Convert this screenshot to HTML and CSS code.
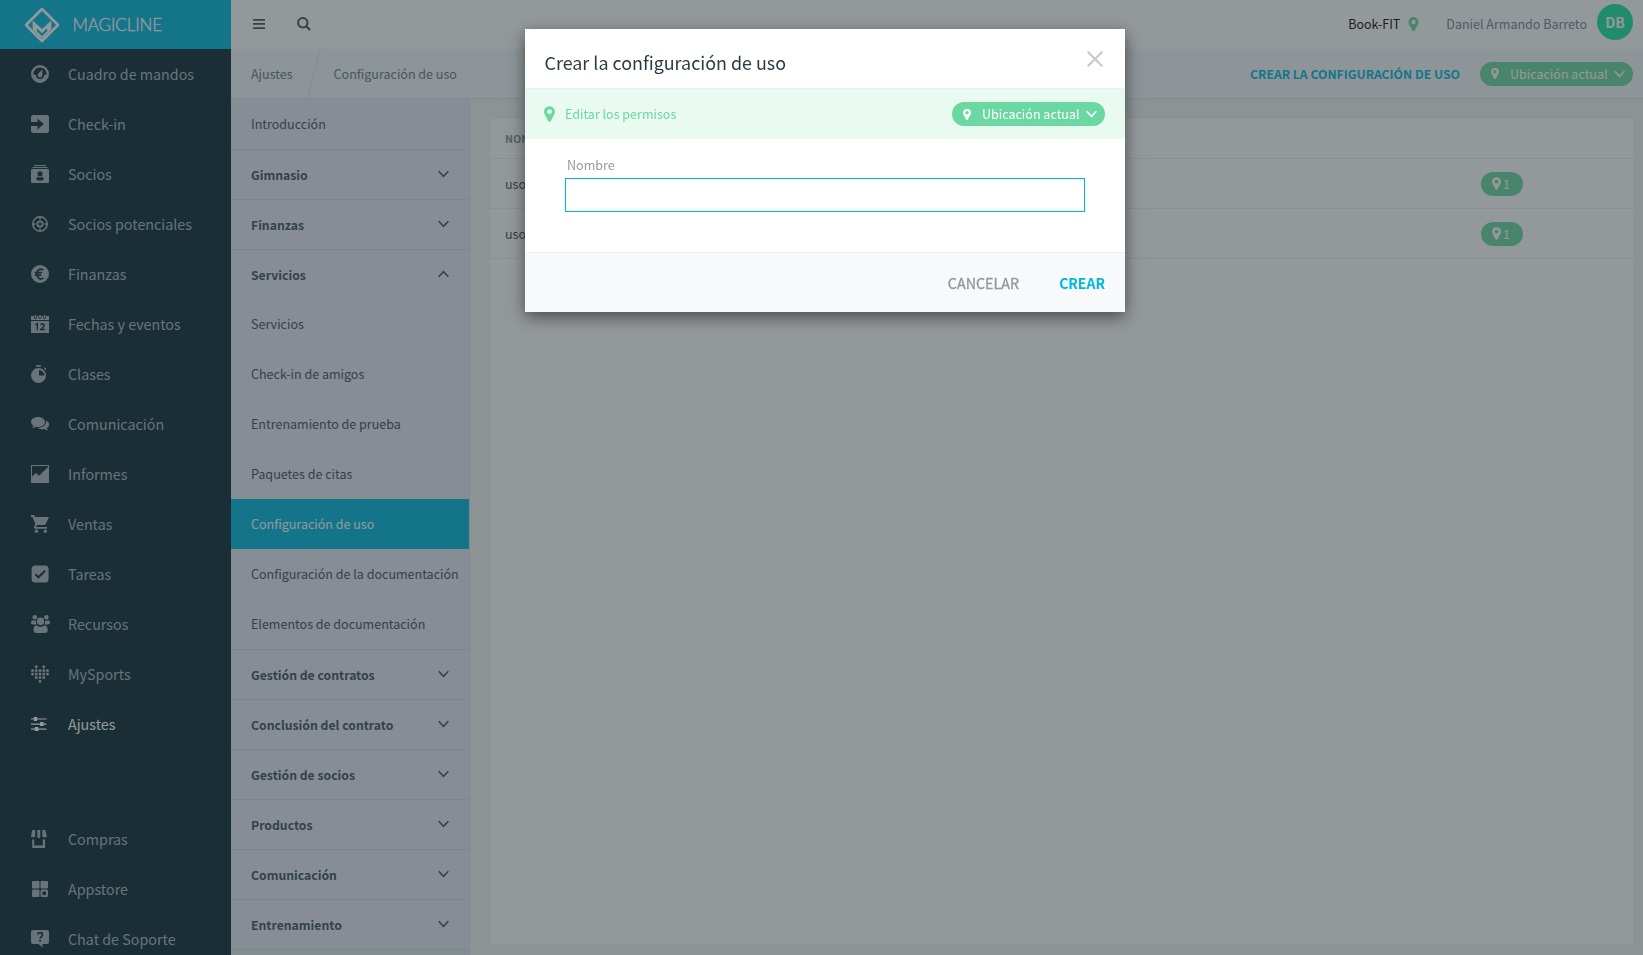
FILE: index.html
```
<!DOCTYPE html>
<html lang="es">
<head>
    <meta charset="UTF-8">
    <meta name="viewport" content="width=device-width, initial-scale=1.0">
    <title>Magicline - Configuración de uso</title>
    <link rel="stylesheet" href="styles.css">
</head>
<body>

    <svg class="sprite" aria-hidden="true">
        <symbol id="chevron" viewBox="0 0 10 7"><path d="M.6 1 5 5.6 9.4 1" fill="none" stroke="currentColor" stroke-width="1.4"/></symbol>
        <symbol id="pin" viewBox="0 0 10 14"><path fill-rule="evenodd" d="M5 0a4.9 4.9 0 0 1 5 4.9C10 7.5 7.6 9.600 6.400 13.200 6 14.300 4 14.300 3.600 13.200 2.400 9.600 0 7.500 0 4.900A4.900 4.900 0 0 1 5 0zm0 2.700a2.200 2.200 0 1 0 0 4.400 2.200 2.200 0 0 0 0-4.400z"/></symbol>
    </svg>

    <div class="app">
        <aside class="sidebar">
            <div class="logo">
                <svg width="36" height="36" viewBox="0 0 36 36">
                    <path d="M18 2 34 18 18 34 2 18z" fill="none" stroke="#fff" stroke-width="2.600" stroke-linejoin="round"/>
                    <path fill-rule="evenodd" d="M8.700 13.500 18 22l9.300-8.500v9L18 31.800l-9.300-9.300zM12.800 21.300v3L18 29.200l5.200-4.900v-3L18 26z" fill="#fff"/>
                </svg>
                <span>MAGICLINE</span>
            </div>
            <nav class="main-nav">
                <a class="nav-item"><svg class="icon" viewBox="0 0 18 18"><path fill-rule="evenodd" d="M9 0a9 9 0 1 1 0 18A9 9 0 0 1 9 0zM2.500 9.800C2 5.800 5 2.600 9 2.600s7 3.200 6.500 7.200h-2.300A4.300 4.300 0 0 1 9 14a4.300 4.300 0 0 1-4.200-4.200zM11.500 4.200 7.400 8.300a2.400 2.400 0 1 0 4 1.200z"/></svg>Cuadro de mandos</a>
                <a class="nav-item"><svg class="icon" viewBox="0 0 18 18"><path d="M2 0h14a2 2 0 0 1 2 2v14a2 2 0 0 1-2 2H2a2 2 0 0 1-2-2v-5h6.500v3.500L12.800 9 6.500 3.800V7H0V2a2 2 0 0 1 2-2z"/></svg>Check-in</a>
                <a class="nav-item"><svg class="icon" viewBox="0 0 18 18"><path fill-rule="evenodd" d="M3 0h12v1H3zM1.500 2h15v1h-15zM1 4h16a1 1 0 0 1 1 1v12a1 1 0 0 1-1 1H1a1 1 0 0 1-1-1V5a1 1 0 0 1 1-1zm8 2.200a2.600 2.600 0 1 0 0 5.200 2.600 2.600 0 0 0 0-5.200zM5 14c1 2.300 7 2.300 8 0-.4-1.300-1.600-1.900-2.500-1.900-.8.700-2.200.7-3 0C6.600 12.100 5.400 12.700 5 14z"/></svg>Socios</a>
                <a class="nav-item"><svg class="icon" viewBox="0 0 18 18"><g fill="none" stroke="currentColor" stroke-width="1.500"><circle cx="9" cy="9" r="7.200"/><circle cx="9" cy="9" r="2.600" stroke-width="1.800"/><path d="M9 1.500v3.200M9 13.300v3.200M1.500 9h3.200M13.300 9h3.200"/></g></svg>Socios potenciales</a>
                <a class="nav-item"><svg class="icon" viewBox="0 0 18 18"><circle cx="9" cy="9" r="9"/><path class="cut-line" d="M12.300 5.200C9.500 2.800 6 4.700 5.900 9c.1 4.300 3.600 6.200 6.400 3.800M3.800 7.700h7.200M3.800 10.200h6.500" stroke-width="1.700"/></svg>Finanzas</a>
                <a class="nav-item"><svg class="icon" viewBox="0 0 18 18"><path d="M0 1h3v2.500h3V1h1.500v2.500h3V1H12v2.500h3V1h3v4H0zM0 6h18v12H0z"/><path d="M3.700 0h1.500v2.700H3.700zM8.300 0h1.500v2.700H8.300zM12.800 0h1.500v2.700h-1.500z"/><path class="cut-line" d="M4.300 9.600 6.300 8.700v6.500M9.700 10.300c.2-2 3.800-2 3.600.1-.2 1.600-2.200 2.400-3.500 4.100h4.100" stroke-width="1.400"/></svg>Fechas y eventos</a>
                <a class="nav-item"><svg class="icon" viewBox="0 0 18 18"><path fill-rule="evenodd" d="M7.500 3a7.500 7.500 0 1 1 0 15 7.500 7.500 0 0 1 0-15zm.5 2v5.500h5.400A5.500 5.500 0 0 0 8 5zM5.200 0h4.600v1.800H5.200zM12.800 3.300l1-1 1.600 1.600-1 1z"/></svg>Clases</a>
                <a class="nav-item"><svg class="icon" viewBox="0 0 18 18"><path d="M7 2c3.900 0 7 2.200 7 5s-3.100 5-7 5c-.8 0-1.500-.1-2.200-.3-1 .7-2.200 1.200-3.600 1.200.6-.7 1.100-1.300 1.300-2.200C1 9.800 0 8.500 0 7c0-2.800 3.100-5 7-5z"/><path d="M15.100 5.400c4.300 2.200 3.600 6 .7 7.700.2.900.7 1.500 1.300 2.300-1.400 0-2.600-.6-3.600-1.300-2.800.7-5.200 0-6.700-1.200 5 0 9-3.200 8.300-7.500z"/></svg>Comunicación</a>
                <a class="nav-item"><svg class="icon" viewBox="0 0 18 18"><path fill-rule="evenodd" d="M0 0h18v18H0zM1 1v10.500L5 8l3 2.700L17 2V1z"/></svg>Informes</a>
                <a class="nav-item"><svg class="icon" viewBox="0 0 18 18"><path d="M0 0h3l1 2h14l-3.400 7.200c-.3.500-.8.800-1.400.8H6.100L5 12h11v1.700H4.500c-1.500 0-1.900-1-1.200-2.400L4.400 9 1.500 2H0z"/><circle cx="5.500" cy="16.300" r="1.700"/><circle cx="14.300" cy="16.300" r="1.700"/></svg>Ventas</a>
                <a class="nav-item"><svg class="icon" viewBox="0 0 18 18"><rect x=".6" y=".6" width="17" height="17" rx="3.500"/><path class="cut-line" d="M4.400 9.300 7.500 12.300 14 5.700" stroke-width="2"/></svg>Tareas</a>
                <a class="nav-item"><svg class="icon icon-wide" viewBox="0 0 19 18"><circle cx="9.500" cy="6.300" r="3.700"/><circle cx="3.800" cy="2.300" r="2.300"/><circle cx="15.400" cy="2.300" r="2.300"/><path d="M5.800 10.500c2 1.800 5.400 1.800 7.400 0 2.600 0 3.500 2 3.500 4.500 0 2-1 3-3 3H5.500c-2 0-3-1-3-3 0-2.500.8-4.500 3.300-4.500zM1.800 5.200c1 .5 2.200.6 3.200.2-.3 1.700.1 3 1 4.100H2C.6 9.500 0 8.800 0 7.500c0-1.200.6-2.300 1.800-2.300zM17.200 5.200c1.200 0 1.800 1.100 1.800 2.300 0 1.300-.6 2-2 2h-4c.9-1.100 1.300-2.400 1-4.100 1 .4 2.200.3 3.200-.2z"/></svg>Recursos</a>
                <a class="nav-item"><svg class="icon" viewBox="0 0 18 18"><path class="dots" d="M5.250 1.800h0M12.750 1.800h0M1.500 5.400h0M5.250 5.400h0M9 5.400h0M12.750 5.400h0M16.500 5.400h0M1.500 8.900h0M5.250 8.900h0M9 8.900h0M12.750 8.900h0M16.500 8.900h0M5.250 12.600h0M9 12.600h0M12.750 12.600h0M9 16.300h0"/></svg>MySports</a>
                <a class="nav-item current"><svg class="icon" viewBox="0 0 18 18"><path d="M0 3.500h15.500v1H0zM0 8.500h15.500v1.200H0zM0 13.500h15.500v1.200H0zM2.800 2h3.400v4H2.800zM9 7h3.600v4H9zM3.800 12h3.600v4H3.800z"/></svg>Ajustes</a>
            </nav>
            <nav class="main-nav bottom-nav">
                <a class="nav-item"><svg class="icon" viewBox="0 0 18 18"><path d="M1.200 0h3v6.500a1.500 1.500 0 0 1-1.400.8H1A1 1 0 0 1 0 6.200zM6.300 0h3v6.500a1.500 1.500 0 0 1-3 0zM11.400 0h3l1.300 6.200a1 1 0 0 1-1 1.100h-1.900a1.500 1.500 0 0 1-1.400-.8zM1.200 9.500h2v6h8.600v-6h2.300V18H1.200z"/></svg>Compras</a>
                <a class="nav-item"><svg class="icon" viewBox="0 0 18 18"><rect x="1" y="1" width="7.500" height="7.500" rx="1"/><rect x="9.500" y="1" width="7.500" height="7.500" rx="1"/><rect x="1" y="9.500" width="7.500" height="7.500" rx="1"/><rect x="10.500" y="10.500" width="5.500" height="5.500" rx=".5" fill="none" stroke="currentColor" stroke-width="2"/></svg>Appstore</a>
                <a class="nav-item"><svg class="icon" viewBox="0 0 18 18"><path d="M2 0h14a2 2 0 0 1 2 2v10a2 2 0 0 1-2 2h-4.500v3.500L7.500 14H2a2 2 0 0 1-2-2V2a2 2 0 0 1 2-2z"/><path class="cut-line" d="M6.800 4.500c0-2.600 4.700-2.600 4.700.2 0 1.800-2.300 1.900-2.300 3.900" stroke-width="1.700"/><circle class="cut" cx="9.100" cy="10.800" r="1.100"/></svg>Chat de Soporte</a>
            </nav>
        </aside>

        <div class="page">
            <header class="topbar">
                <svg class="burger" width="12" height="10" viewBox="0 0 12 10"><path d="M0 0h12v1.800H0zM0 4h12v1.800H0zM0 8.200h12V10H0z"/></svg>
                <svg class="search" width="14" height="14" viewBox="0 0 14 14"><g fill="none" stroke="currentColor"><circle cx="5.800" cy="5.800" r="4.700" stroke-width="2"/><path d="M9.200 9.200 13 13" stroke-width="2.300"/></g></svg>
                <span class="studio">Book-FIT</span>
                <svg class="studio-pin" width="11" height="14"><use href="#pin"/></svg>
                <span class="user">Daniel Armando Barreto</span>
                <span class="avatar">DB</span>
            </header>

            <div class="breadcrumb">
                <span class="crumb">Ajustes</span>
                <svg class="slash" width="14" height="49" viewBox="0 0 14 49"><path d="M13.300 0 .7 49" fill="none" stroke="currentColor"/></svg>
                <span class="crumb">Configuración de uso</span>
                <a class="create-link">CREAR LA CONFIGURACIÓN DE USO</a>
                <span class="location"><svg class="pill-pin" width="8" height="11"><use href="#pin"/></svg>Ubicación actual<svg class="chevron" width="11" height="8"><use href="#chevron"/></svg></span>
            </div>

            <div class="columns">
                <nav class="submenu">
                    <a class="sub-item">Introducción</a>
                    <a class="section">Gimnasio<svg class="chevron" width="11" height="8"><use href="#chevron"/></svg></a>
                    <a class="section">Finanzas<svg class="chevron" width="11" height="8"><use href="#chevron"/></svg></a>
                    <a class="section">Servicios<svg class="chevron up" width="11" height="8"><use href="#chevron"/></svg></a>
                    <a class="sub-item">Servicios</a>
                    <a class="sub-item">Check-in de amigos</a>
                    <a class="sub-item">Entrenamiento de prueba</a>
                    <a class="sub-item">Paquetes de citas</a>
                    <a class="sub-item active">Configuración de uso</a>
                    <a class="sub-item">Configuración de la documentación</a>
                    <a class="sub-item">Elementos de documentación</a>
                    <a class="section">Gestión de contratos<svg class="chevron" width="11" height="8"><use href="#chevron"/></svg></a>
                    <a class="section">Conclusión del contrato<svg class="chevron" width="11" height="8"><use href="#chevron"/></svg></a>
                    <a class="section">Gestión de socios<svg class="chevron" width="11" height="8"><use href="#chevron"/></svg></a>
                    <a class="section">Productos<svg class="chevron" width="11" height="8"><use href="#chevron"/></svg></a>
                    <a class="section">Comunicación<svg class="chevron" width="11" height="8"><use href="#chevron"/></svg></a>
                    <a class="section">Entrenamiento<svg class="chevron" width="11" height="8"><use href="#chevron"/></svg></a>
                    <div class="section-end"></div>
                </nav>

                <main class="content">
                    <div class="card">
                        <div class="row head"><span>NOMBRE</span></div>
                        <div class="row"><span>uso</span><span class="count"><svg width="9" height="13"><use href="#pin"/></svg>1</span></div>
                        <div class="row"><span>uso</span><span class="count"><svg width="9" height="13"><use href="#pin"/></svg>1</span></div>
                    </div>
                </main>
            </div>
        </div>
    </div>

    <div class="overlay">
        <div class="modal">
            <div class="modal-header">
                <h1>Crear la configuración de uso</h1>
                <svg class="close" width="16" height="16" viewBox="0 0 16 16"><path d="M1.300 1.300l13.400 13.400M14.700 1.300 1.300 14.700" fill="none" stroke="currentColor" stroke-width="2.300" stroke-linecap="round"/></svg>
            </div>
            <div class="permissions">
                <svg class="perm-pin" width="11" height="16"><use href="#pin"/></svg>
                <span class="perm-label">Editar los permisos</span>
                <span class="location"><svg class="pill-pin" width="8" height="11"><use href="#pin"/></svg>Ubicación actual<svg class="chevron" width="11" height="8"><use href="#chevron"/></svg></span>
            </div>
            <div class="modal-body">
                <label for="name">Nombre</label>
                <input type="text" id="name">
            </div>
            <div class="modal-footer">
                <button class="cancel">CANCELAR</button>
                <button class="create">CREAR</button>
            </div>
        </div>
    </div>

</body>
</html>
```
FILE: styles.css
```
* {
    box-sizing: border-box;
}

body {
    margin: 0;
    height: 100vh;
    overflow: hidden;
    font-family: "Noto Sans CJK SC", "Noto Sans", sans-serif;
    font-size: 12.53px;
    line-height: 20px;
    color: #3e525a;
}

svg {
    fill: currentColor;
    flex: none;
}

.sprite {
    display: none;
}

.app {
    display: flex;
    height: 100vh;
}

/* left navigation */
.sidebar {
    width: 231px;
    height: 100vh;
    flex: none;
    overflow: hidden;
    background: #0c2c32;
    color: #a8b6bc;
}

.logo {
    display: flex;
    align-items: center;
    gap: 12.5px;
    height: 49px;
    padding-left: 24px;
    background: #00b8dd;
    color: #fff;
    font-family: Lato, sans-serif;
    font-size: 17px;
    font-weight: 300;
    letter-spacing: -0.1px;
    -webkit-text-stroke: 0.3px #fff;
}

.nav-item {
    display: flex;
    align-items: center;
    gap: 19px;
    height: 50px;
    padding: 0 0 1px 31px;
    font-size: 14.3px;
}

.icon {
    width: 18px;
    height: 18px;
}

.icon-wide {
    width: 19px;
    margin-right: -1px;
}

.current {
    color: #fff;
}

.bottom-nav {
    margin-top: 65px;
}

.cut {
    fill: #0c2c32;
}

.cut-line {
    fill: none;
    stroke: #0c2c32;
}

.dots {
    fill: none;
    stroke: currentColor;
    stroke-width: 3;
    stroke-linecap: round;
}

/* top bars */
.page {
    flex: 1;
    display: flex;
    flex-direction: column;
    min-width: 0;
}

.topbar {
    display: flex;
    align-items: center;
    height: 49px;
    padding: 0 10px 2px 22px;
    background: #fff;
}

.search {
    margin-left: 32px;
}

.studio {
    margin-left: auto;
    color: #0a0a0a;
}

.studio-pin {
    margin: 1px 27px 0 8px;
    color: #6bd8a1;
}

.user {
    color: #74858f;
}

.avatar {
    width: 36px;
    height: 36px;
    margin: -3px 0 0 10px;
    border-radius: 50%;
    background: #1ae69c;
    color: #fff;
    font-size: 14px;
    font-weight: bold;
    line-height: 36px;
    text-align: center;
}

.breadcrumb {
    display: flex;
    align-items: center;
    height: 50px;
    padding: 0 10px 0 20px;
    background: #f2f8f8;
    border-bottom: 1px solid #dde5e9;
}

.crumb {
    color: #687a84;
}

.slash {
    margin: 0 13px 0 14px;
    color: #dde5e9;
}

.create-link {
    margin: 0 20px 0 auto;
    color: #00b8dd;
    font-size: 12.22px;
    font-weight: bold;
}

.location {
    display: flex;
    align-items: center;
    width: 153px;
    height: 24px;
    padding: 0 8px 0 11px;
    border-radius: 12px;
    background: #6bd8a1;
    color: #fff;
}

.pill-pin {
    margin-right: 11px;
}

.location .chevron {
    margin-left: auto;
}

/* settings menu */
.columns {
    flex: 1;
    display: flex;
    min-height: 0;
}

.submenu {
    width: 239px;
    flex: none;
    overflow: hidden;
    background: #e4e8f2;
    border-right: 1px solid #dce4ec;
}

.sub-item {
    display: flex;
    align-items: center;
    height: 50px;
    padding-left: 20px;
    white-space: nowrap;
}

.section {
    display: flex;
    align-items: center;
    justify-content: space-between;
    height: 50px;
    padding: 1px 20px 0;
    border-top: 1px solid #ccdce2;
    font-size: 12.22px;
    font-weight: bold;
}

.section .chevron {
    margin-top: -2px;
}

.up {
    transform: rotate(180deg);
}

.active {
    background: #00b8dd;
    color: #fff;
}

.section-end {
    height: 6px;
    border-top: 1px solid #ccdce2;
    background: #deeaee;
}

/* table */
.content {
    flex: 1;
    padding: 20px 10px 11px 20px;
    background: #eef4f2;
}

.card {
    height: 100%;
    background: #fff;
}

.row {
    display: flex;
    align-items: center;
    justify-content: space-between;
    height: 50px;
    padding: 0 110px 0 15px;
    border-bottom: 1px solid #eceff1;
}

.head {
    height: 40px;
    font-size: 10.7px;
    font-weight: bold;
    color: #84929a;
}

.count {
    display: flex;
    align-items: center;
    gap: 2px;
    width: 42px;
    height: 24px;
    padding-left: 11px;
    border-radius: 12px;
    background: #6bd8a1;
    color: #fff;
}

/* modal */
.overlay {
    position: fixed;
    inset: 0;
    display: flex;
    align-items: flex-start;
    padding: 29px 0 0 525px;
    background: rgba(40, 50, 56, 0.5);
}

.modal {
    width: 600px;
    background: #fff;
    box-shadow: 0 5px 15px rgba(0, 0, 0, 0.5);
}

.modal-header {
    display: flex;
    justify-content: space-between;
    height: 60px;
    padding: 20px 22.5px 0 19.5px;
    border-bottom: 1px solid #eceef0;
}

h1 {
    margin: 0;
    font-size: 17.9px;
    font-weight: normal;
    line-height: 26px;
    color: #2b3a44;
}

.close {
    margin-top: 2px;
    color: #c8c9ca;
}

.permissions {
    display: flex;
    align-items: center;
    height: 50px;
    padding: 0 20px 0 19px;
    background: #e9faf1;
    color: #6bd8a1;
}

.perm-label {
    margin: 0 auto 0 10px;
}

.modal-body {
    display: flex;
    flex-direction: column;
    height: 113px;
    padding: 16px 40px 0;
}

label {
    padding-left: 2px;
    color: #95999d;
}

input {
    height: 34px;
    margin-top: 3px;
    border: 1px solid #00b8dd;
    outline: none;
}

.modal-footer {
    display: flex;
    align-items: center;
    justify-content: flex-end;
    gap: 40px;
    height: 60px;
    padding: 0 20px;
    background: #f7f9fb;
    border-top: 1px solid #eceef0;
}

button {
    padding: 0;
    border: none;
    background: none;
    font-family: inherit;
    font-size: 14.3px;
}

.cancel {
    color: #95999d;
    -webkit-text-stroke: 0.35px #95999d;
}

.create {
    color: #00b8dd;
    font-size: 14px;
    font-weight: bold;
}
```
